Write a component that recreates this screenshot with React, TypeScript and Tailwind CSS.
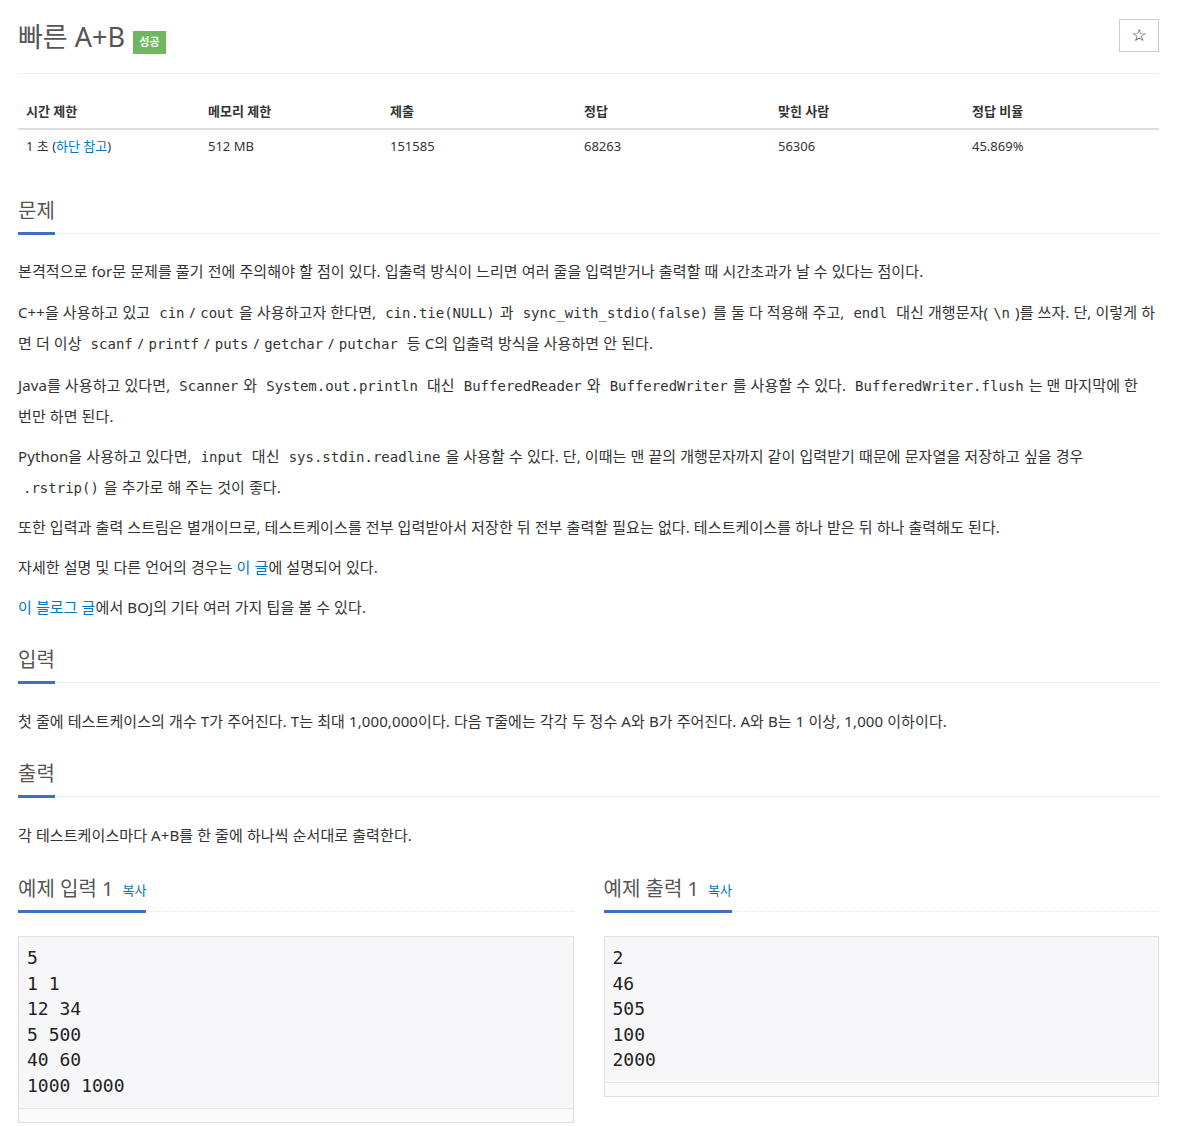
import React from "react";

const C = ({ children }: { children: React.ReactNode }) => (
  <code className="px-[5px] font-['DejaVu_Sans_Mono',monospace] text-[14px] tracking-normal text-[#333]">{children}</code>
);

const A = ({ children }: { children: React.ReactNode }) => (
  <a className="text-[#0076c0] no-underline" href="#">{children}</a>
);

const Heading = ({ title, extra, mt = "mt-[16px]", mb = "mb-[23px]" }: { title: string; extra?: React.ReactNode; mt?: string; mb?: string }) => (
  <div className={`${mt} ${mb} border-b border-dotted border-[#d8dde6] h-[35px] flex items-start`}>
    <div className="h-[36px] border-b-[3px] border-[#3a72c0] flex items-center text-[#555] text-[20px] leading-[24px] pb-[9px]">
      <span>{title}</span>
      {extra}
    </div>
  </div>
);

const P = ({ children, pt = "", mb = "mb-[10px]" }: { children: React.ReactNode; pt?: string; mb?: string }) => (
  <p className={`${mb} leading-[30px] tracking-[0.1px] ${pt}`}>{children}</p>
);

const Pre = ({ lines }: { lines: string[] }) => (
  <div className="border border-[#dfe1e8] bg-[#f7f7f9]">
    <pre className="pt-[8px] pb-[9px] px-[8px] font-['DejaVu_Sans_Mono',monospace] text-[18px] leading-[25.6px] text-[#222]">
      {lines.join("\n")}
    </pre>
    <div className="h-[14px] border-t border-[#e4e4e8] bg-[#fafafa]" />
  </div>
);

export default function App() {
  const cols = [
    ["시간 제한", "1초"],
    ["메모리 제한", "512 MB"],
    ["제출", "151585"],
    ["정답", "68263"],
    ["맞힌 사람", "56306"],
    ["정답 비율", "45.869%"],
  ];
  return (
    <div className="bg-white min-h-[1126px] px-[18px] pt-[19px] flex flex-col font-['Noto_Sans','Noto_Sans_CJK_KR',sans-serif] text-[#333] text-[15px] w-[1177px]">
      <div className="flex items-start justify-between">
        <div className="flex items-start">
          <h1 className="text-[27px] leading-[36px] text-[#555] font-normal">빠른 A+B</h1>
          <span className="ml-[8px] mt-[12px] h-[23px] w-[33px] flex items-center justify-center bg-[#6cb760] text-white text-[11px] font-bold">성공</span>
        </div>
        <button className="w-[40px] h-[33px] border border-[#ccc] flex items-center justify-center text-[17px] leading-none text-[#222] font-['DejaVu_Sans',sans-serif]">☆</button>
      </div>
      <hr className="mt-[18px] border-t border-[#eee]" />
      <div className="mt-[20px] mb-[20px] text-[13px]">
        <div className="grid grid-cols-[182px_182px_194px_194px_194px_194px] border-b-2 border-[#ddd]">
          {cols.map((c) => (
            <div key={c[0]} className="px-[8px] py-[8px] leading-[18px] font-bold text-[#333]">{c[0]}</div>
          ))}
        </div>
        <div className="grid grid-cols-[182px_182px_194px_194px_194px_194px]">
          <div className="px-[8px] pt-[7px] pb-[9px] leading-[18px]">1 초 (<A>하단 참고</A>)</div>
          {cols.slice(1).map((c) => (
            <div key={c[0]} className="px-[8px] pt-[7px] pb-[9px] leading-[18px]">{c[1]}</div>
          ))}
        </div>
      </div>

      <Heading title="문제" mt="mt-[15px]" mb="mb-[22px]" />
      <P>본격적으로 for문 문제를 풀기 전에 주의해야 할 점이 있다. 입출력 방식이 느리면 여러 줄을 입력받거나 출력할 때 시간초과가 날 수 있다는 점이다.</P>
      <P pt="pt-[1px]">
        C++을 사용하고 있고 <C>cin</C>/<C>cout</C>을 사용하고자 한다면, <C>cin.tie(NULL)</C>과 <C>sync_with_stdio(false)</C>를 둘 다 적용해 주고, <C>endl</C> 대신 개행문자(<C>\n</C>)를 쓰자. 단, 이렇게 하<br />면 더 이상 <C>scanf</C>/<C>printf</C>/<C>puts</C>/<C>getchar</C>/<C>putchar</C> 등 C의 입출력 방식을 사용하면 안 된다.
      </P>
      <P pt="pt-[1px]">
        Java를 사용하고 있다면, <C>Scanner</C>와 <C>System.out.println</C> 대신 <C>BufferedReader</C>와 <C>BufferedWriter</C>를 사용할 수 있다. <C>BufferedWriter.flush</C>는 맨 마지막에 한<br />번만 하면 된다.
      </P>
      <P mb="mb-[9px]">
        Python을 사용하고 있다면, <C>input</C> 대신 <C>sys.stdin.readline</C>을 사용할 수 있다. 단, 이때는 맨 끝의 개행문자까지 같이 입력받기 때문에 문자열을 저장하고 싶을 경우<br /><C>.rstrip()</C>을 추가로 해 주는 것이 좋다.
      </P>
      <P>또한 입력과 출력 스트림은 별개이므로, 테스트케이스를 전부 입력받아서 저장한 뒤 전부 출력할 필요는 없다. 테스트케이스를 하나 받은 뒤 하나 출력해도 된다.</P>
      <P>자세한 설명 및 다른 언어의 경우는 <A>이 글</A>에 설명되어 있다.</P>
      <P><A>이 블로그 글</A>에서 BOJ의 기타 여러 가지 팁을 볼 수 있다.</P>

      <Heading title="입력" />
      <P>첫 줄에 테스트케이스의 개수 T가 주어진다. T는 최대 1,000,000이다. 다음 T줄에는 각각 두 정수 A와 B가 주어진다. A와 B는 1 이상, 1,000 이하이다.</P>

      <Heading title="출력" />
      <P>각 테스트케이스마다 A+B를 한 줄에 하나씩 순서대로 출력한다.</P>

      <div className="grid grid-cols-2 gap-[30px]">
        <div>
          <Heading title="예제 입력 1" mt="mt-[17px]" mb="mb-[24px]" extra={<A><span className="ml-[9px] text-[13px]">복사</span></A>} />
          <Pre lines={["5", "1 1", "12 34", "5 500", "40 60", "1000 1000"]} />
        </div>
        <div>
          <Heading title="예제 출력 1" mt="mt-[17px]" mb="mb-[24px]" extra={<A><span className="ml-[9px] text-[13px]">복사</span></A>} />
          <Pre lines={["2", "46", "505", "100", "2000"]} />
        </div>
      </div>
    </div>
  );
}
